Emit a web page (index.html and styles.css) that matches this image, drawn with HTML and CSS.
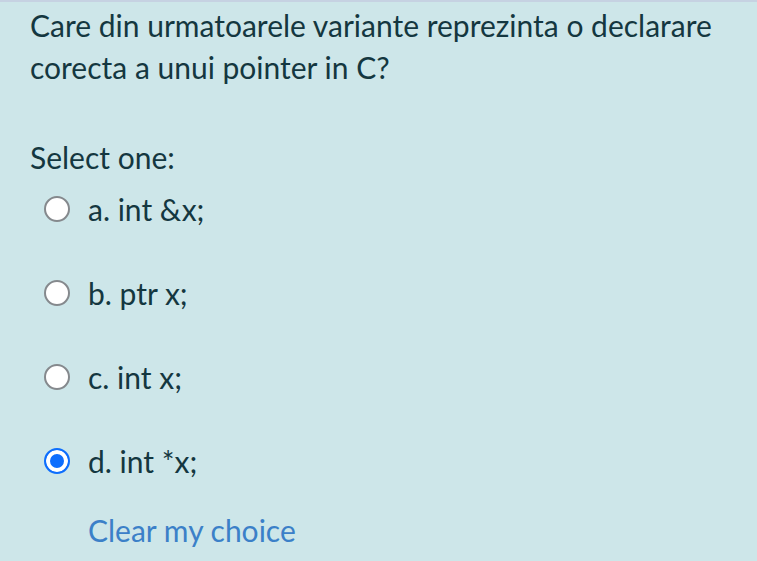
FILE: index.html
```html
<!DOCTYPE html>
<html lang="ro">
<head>
<meta charset="utf-8">
<title>Quiz</title>
<link rel="stylesheet" href="styles.css">
</head>
<body>
<div class="que">
  <div class="qtext">Care din urmatoarele variante reprezinta o declarare corecta a unui pointer in C?</div>
  <div class="ablock">
    <div class="prompt">Select one:</div>
    <div class="answer">
      <div class="opt"><span class="radio"></span><span class="label">a. int &amp;x;</span></div>
      <div class="opt"><span class="radio"></span><span class="label">b. ptr x;</span></div>
      <div class="opt"><span class="radio"></span><span class="label">c. int x;</span></div>
      <div class="opt"><span class="radio checked"></span><span class="label">d. int *x;</span></div>
    </div>
    <div class="clear"><a href="#">Clear my choice</a></div>
  </div>
</div>
</body>
</html>
```
FILE: styles.css
```css
html, body {
  margin: 0;
  padding: 0;
  height: 100%;
}
body {
  background: #cde6e9;
  font-family: Lato, "Open Sans", sans-serif;
  font-size: 30px;
  line-height: 42px;
  color: #143740;
  border-top: 2px solid #c6d2e2;
  box-sizing: border-box;
}
.que {
  padding: 2px 20px 0 30px;
}
.qtext {
  max-width: 700px;
}
.ablock {
  margin-top: 48px;
}
.answer {
  display: flex;
  flex-direction: column;
  gap: 42px;
  margin-top: 10px;
}
.opt {
  display: flex;
  align-items: center;
  gap: 18px;
  padding-left: 14px;
}
.radio {
  width: 22px;
  height: 22px;
  border: 2px solid #85898d;
  border-radius: 50%;
  background: #fff;
  flex: none;
}
.radio.checked {
  border-color: #0d6efd;
  background: #0d6efd;
  box-shadow: inset 0 0 0 4px #fff;
}
.clear {
  margin-top: 27px;
  padding-left: 58px;
}
.clear a {
  color: #3b80c8;
  text-decoration: none;
}
```
